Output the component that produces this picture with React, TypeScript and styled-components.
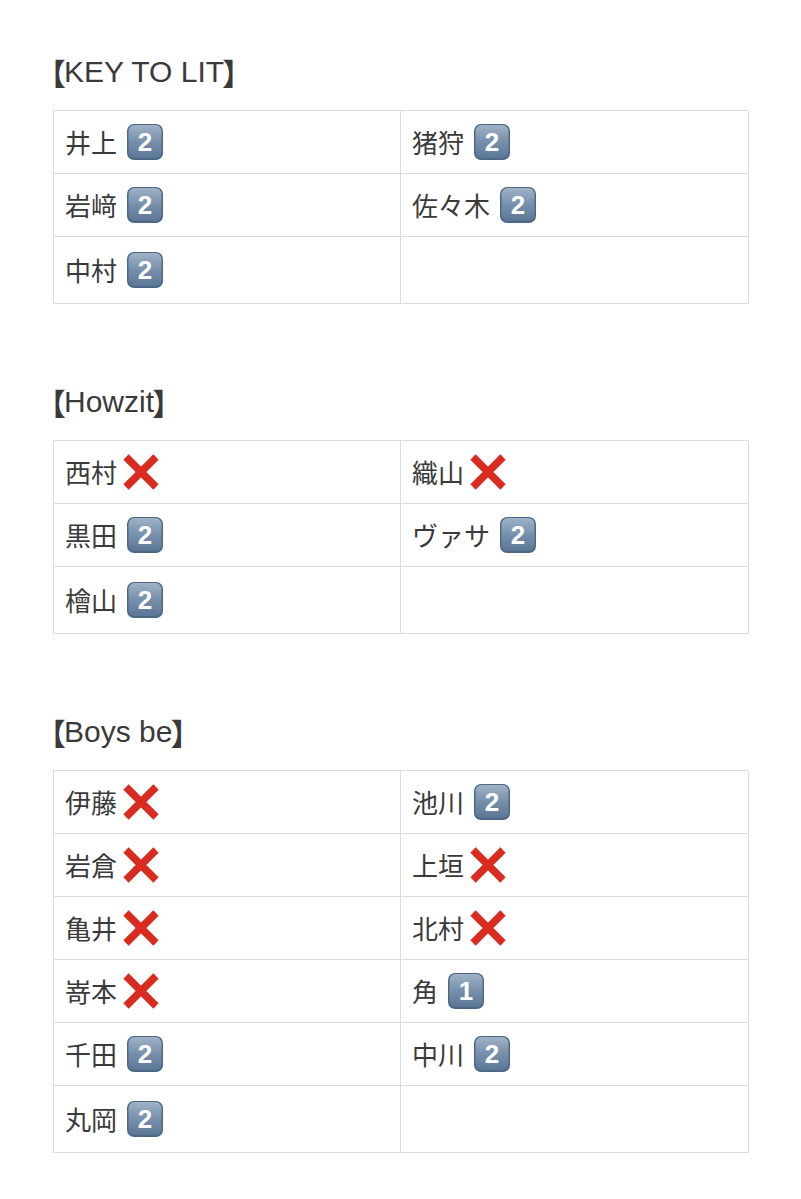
import * as React from 'react';
import styled, { createGlobalStyle } from 'styled-components';

type Mark = '1' | '2' | 'x';

interface IEntry {
  name: string;
  mark: Mark;
}

interface ISection {
  title: string;
  entries: IEntry[];
}

const sections: ISection[] = [
  {
    title: 'KEY TO LIT',
    entries: [
      { name: '井上', mark: '2' },
      { name: '猪狩', mark: '2' },
      { name: '岩﨑', mark: '2' },
      { name: '佐々木', mark: '2' },
      { name: '中村', mark: '2' },
    ],
  },
  {
    title: 'Howzit',
    entries: [
      { name: '西村', mark: 'x' },
      { name: '織山', mark: 'x' },
      { name: '黒田', mark: '2' },
      { name: 'ヴァサ', mark: '2' },
      { name: '檜山', mark: '2' },
    ],
  },
  {
    title: 'Boys be',
    entries: [
      { name: '伊藤', mark: 'x' },
      { name: '池川', mark: '2' },
      { name: '岩倉', mark: 'x' },
      { name: '上垣', mark: 'x' },
      { name: '亀井', mark: 'x' },
      { name: '北村', mark: 'x' },
      { name: '嵜本', mark: 'x' },
      { name: '角', mark: '1' },
      { name: '千田', mark: '2' },
      { name: '中川', mark: '2' },
      { name: '丸岡', mark: '2' },
    ],
  },
];

const GlobalStyle = createGlobalStyle`
  html, body {
    margin: 0;
    padding: 0;
    background: #fff;
  }
  body {
    font-family: "Noto Sans CJK JP", "Noto Sans", sans-serif;
    color: #3a3a3a;
  }
`;

const Page = styled.div`
  padding: 52px 53px 40px;
`;

const Section = styled.section`
  & + & {
    margin-top: 78px;
  }
`;

const Heading = styled.h2`
  display: flex;
  align-items: center;
  margin: 0 0 18px -3px;
  height: 40px;
  line-height: 40px;
  font-family: "Liberation Sans", Arial, sans-serif;
  font-size: 30px;
  font-weight: 400;
  color: #3a3a3a;
`;

const Bracket = styled.span<{ $close?: boolean }>`
  font-family: "Noto Sans CJK JP", sans-serif;
  font-feature-settings: "palt";
  font-size: 30px;
  font-weight: 700;
  color: #3a3a3a;
  margin: ${(p) => (p.$close ? '0 0 0 -1px' : '0 -1px 0 0')};
`;

const Table = styled.div`
  display: grid;
  grid-template-columns: 347px 348px;
  border-top: 1px solid #dcdcdc;
  border-left: 1px solid #dcdcdc;
`;

const Cell = styled.div<{ $last?: boolean }>`
  height: ${(p) => (p.$last ? 66 : 62)}px;
  box-sizing: content-box;
  display: flex;
  align-items: center;
  gap: 9px;
  padding: 0 11px;
  border-right: 1px solid #dcdcdc;
  border-bottom: 1px solid #dcdcdc;
  font-size: 26px;
  color: #3a3a3a;
`;

const Name = styled.span`
  line-height: 1;
`;

const CrossSvg = styled.svg`
  margin-left: -4px;
`;

const Keycap = ({ digit }: { digit: string }) => (
  <svg width="38" height="38" viewBox="0 0 38 38">
    <defs>
      <linearGradient id={`kc${digit}`} x1="0" y1="0" x2="0" y2="1">
        <stop offset="0" stopColor="#9fb2c6" />
        <stop offset="0.5" stopColor="#7690ac" />
        <stop offset="1" stopColor="#5c7796" />
      </linearGradient>
    </defs>
    <rect x="1" y="1" width="36" height="36" rx="7" fill="#4d6886" />
    <rect x="2.5" y="2" width="33" height="33" rx="6" fill={`url(#kc${digit})`} />
    <text
      x="19"
      y="28"
      textAnchor="middle"
      fontFamily="'Liberation Sans', Arial, sans-serif"
      fontWeight="700"
      fontSize="26"
      fill="#fff"
    >
      {digit}
    </text>
  </svg>
);

const Cross = () => (
  <CrossSvg width="38" height="38" viewBox="0 0 38 38">
    <path d="M4 4 L34 34 M34 4 L4 34" stroke="#d92b20" strokeWidth="7.5" strokeLinecap="butt" />
  </CrossSvg>
);

const MarkIcon = ({ mark }: { mark: Mark }) =>
  mark === 'x' ? <Cross /> : <Keycap digit={mark} />;

export default function App() {
  return (
    <Page>
      <GlobalStyle />
      {sections.map((s) => {
        const cells: (IEntry | null)[] = [...s.entries];
        if (cells.length % 2) cells.push(null);
        const lastRowStart = cells.length - 2;
        return (
          <Section key={s.title}>
            <Heading>
              <Bracket>【</Bracket>
              <span>{s.title}</span>
              <Bracket $close>】</Bracket>
            </Heading>
            <Table>
              {cells.map((e, i) => (
                <Cell key={i} $last={i >= lastRowStart}>
                  {e && (
                    <>
                      <Name>{e.name}</Name>
                      <MarkIcon mark={e.mark} />
                    </>
                  )}
                </Cell>
              ))}
            </Table>
          </Section>
        );
      })}
    </Page>
  );
}
